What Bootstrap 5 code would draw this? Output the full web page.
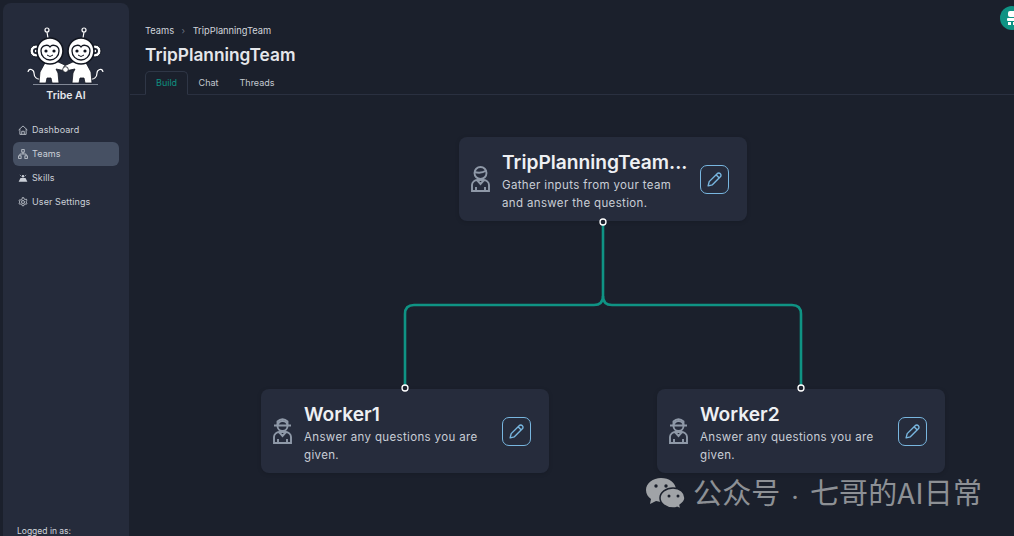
<!DOCTYPE html>
<html lang="en">
<head>
    <meta charset="UTF-8">
    <title>TripPlanningTeam - Tribe AI</title>
    <link href="https://cdn.jsdelivr.net/npm/bootstrap@5.3.3/dist/css/bootstrap.min.css" rel="stylesheet">
    <style>
        html, body { height: 100%; overflow: hidden; }
        body {
            font-family: Inter, "Liberation Sans", sans-serif;
            background-color: #1b202c;
            color: #e5e7eb;
        }
        .side-panel {
            width: 126px;
            margin: 3px 1px 0 3px;
            background-color: #252b3b;
            border-radius: 8px 8px 0 0;
            flex-shrink: 0;
        }
        .logo-box { padding-top: 21px; height: 111px; }
        .logo-box svg { display: block; margin: 0 auto; }
        .logo-name { font-size: 10.5px; font-weight: 600; line-height: 12px; color: #e5e7eb; margin-top: 5px; }
        .side-nav { padding: 4px 10px 0; }
        .side-nav .nav-link {
            height: 24px;
            padding: 0 0 0 5px;
            font-size: 9px;
            letter-spacing: .1px;
            color: #cbd0d8;
            border-radius: 6px;
            gap: 4px;
        }
        .side-nav .nav-link.active { background-color: #465063; color: #cbd0d8; }
        .side-nav svg { width: 10px; height: 10px; flex-shrink: 0; }
        .login-note { font-size: 8.5px; color: #d1d5db; padding: 0 0 0 14px; line-height: 12px; margin-bottom: -1px; }
        .page-head { padding: 25px 0 0 15px; height: 95px; border-bottom: 1px solid #2a3040; }
        .page-head .breadcrumb {
            font-size: 9.3px;
            line-height: 12px;
            margin: 0;
            --bs-breadcrumb-divider: "›";
            --bs-breadcrumb-divider-color: #6b7280;
            --bs-breadcrumb-item-padding-x: 7.5px;
        }
        .page-head .breadcrumb-item, .page-head .breadcrumb-item.active { color: #d1d5db; }
        .page-head h1 { font-size: 17.3px; line-height: 22px; font-weight: 600; margin: 7px 0 5px; color: #e5e7eb; }
        .head-tabs { --bs-nav-tabs-border-width: 0; }
        .head-tabs .nav-link {
            font-size: 9px;
            height: 24px;
            line-height: 13px;
            padding: 4px 9.5px;
            color: #c3c8d0;
            border: 1px solid transparent;
            border-radius: 5px 5px 0 0;
        }
        .head-tabs .nav-link.active {
            background: transparent;
            padding: 4px 10px;
            color: #0f8f80;
            border-color: #2f3646;
            border-bottom-color: #1b202c;
        }
        .flow-canvas { position: relative; flex-grow: 1; }
        .flow-lines { position: absolute; left: 0; top: 0; z-index: 1; }
        .flow-node {
            position: absolute;
            width: 288px;
            height: 84px;
            background-color: #262c3c;
            border-radius: 8px;
            padding: 0 18px 0 12px;
            box-shadow: 0 1px 4px rgba(0, 0, 0, .15);
        }
        .node-lead { left: 329px; top: 42px; }
        .node-one { left: 131px; top: 294px; }
        .node-two { left: 527px; top: 294px; }
        .node-icon { width: 19px; height: 26px; flex-shrink: 0; margin-right: 12px; }
        .node-text { flex-grow: 1; min-width: 0; padding-top: 4px; }
        .node-title { font-size: 19.2px; line-height: 22px; font-weight: 600; color: #eef0f3; margin: 0 0 3px; white-space: nowrap; }
        .node-desc { font-size: 11.5px; line-height: 18px; letter-spacing: .35px; color: #c9ced6; margin: 0; }
        .edit-btn {
            width: 29px;
            height: 29px;
            padding: 0;
            flex-shrink: 0;
            border: 1px solid #78b6df;
            border-radius: 7px;
            background: transparent;
            color: #78b6df;
        }
        .edit-btn svg { width: 17px; height: 17px; display: block; margin: 0 auto; }
        .user-dot {
            position: absolute;
            left: 1000px;
            top: 6px;
            width: 24px;
            height: 24px;
            border-radius: 50%;
            background-color: #0f9384;
        }
        .user-dot svg { position: absolute; left: 6px; top: 5px; width: 12px; height: 14px; }
        .water-mark {
            position: absolute;
            left: 646px;
            top: 473px;
            height: 40px;
            gap: 7px;
            font-family: "Noto Sans CJK SC", sans-serif;
            font-size: 29px;
            line-height: 40px;
            letter-spacing: .15px;
            word-spacing: -1px;
            color: #8d9095;
            white-space: nowrap;
        }
        .mark-sep { font-size: 18px; font-weight: 300; }
    </style>
</head>
<body class="d-flex">

    <aside class="side-panel d-flex flex-column">
        <div class="logo-box text-center">
            <svg width="80" height="61" viewBox="26 24 80 61" fill="none">
                <!-- antennas -->
                <g stroke="#fff" stroke-width="1.200">
                    <circle cx="47" cy="30" r="2" fill="#252b3b"/><circle cx="84" cy="30" r="2" fill="#252b3b"/>
                    <path d="M47 32l1 6M84 32l-1 6"/>
                </g>
                <!-- tails -->
                <path d="M41 79c-4 1-7-2-7-6 0-3-5-6-6-1M90 79c4 1 7-2 7-6 0-3 5-6 6-1" stroke="#fff" stroke-width="1.200"/>
                <!-- bodies -->
                <g fill="#fff" stroke="#11151f" stroke-width=".8">
                    <path d="M46 61l-6 11-1 11h7l1-5 4 0 1 5h7l-1-10-2-4 10 2 1-5-11-5-4-2z"/>
                    <path d="M85 61l6 11 1 11h-7l-1-5-4 0-1 5h-7l1-10 2-4-10 2-1-5 11-5 4-2z"/>
                    <circle cx="65.500" cy="69.500" r="2.800"/>
                </g>
                <!-- ears -->
                <circle cx="36" cy="51" r="6" fill="#fff" stroke="#11151f"/><circle cx="36" cy="51" r="3" fill="#1b202c"/><circle cx="36" cy="51" r="1.200" fill="#fff"/>
                <circle cx="95" cy="51" r="6" fill="#fff" stroke="#11151f"/><circle cx="95" cy="51" r="3" fill="#1b202c"/><circle cx="95" cy="51" r="1.200" fill="#fff"/>
                <!-- heads -->
                <circle cx="50" cy="51" r="13" fill="#fff" stroke="#11151f" stroke-width="1.600"/>
                <circle cx="81" cy="51" r="13" fill="#fff" stroke="#11151f" stroke-width="1.600"/>
                <path d="M50 47c-2-3-9-2-9 4 0 5 4 9 9 9s9-4 9-9c0-6-7-7-9-4z" stroke="#11151f" stroke-width="1.300"/>
                <path d="M81 47c-2-3-9-2-9 4 0 5 4 9 9 9s9-4 9-9c0-6-7-7-9-4z" stroke="#11151f" stroke-width="1.300"/>
                <circle cx="46" cy="51" r="1.600" fill="#11151f"/><circle cx="54" cy="51" r="1.600" fill="#11151f"/>
                <circle cx="77" cy="51" r="1.600" fill="#11151f"/><circle cx="85" cy="51" r="1.600" fill="#11151f"/>
                <path d="M47 55q3 3 6 0M78 55q3 3 6 0" stroke="#11151f"/>
                <path d="M33 84.500h65" stroke="#9aa1ad" stroke-width=".8"/>
            </svg>
            <div class="logo-name">Tribe AI</div>
        </div>

        <nav class="nav flex-column side-nav">
            <a class="nav-link d-flex align-items-center" href="#">
                <svg viewBox="0 0 16 16" fill="none" stroke="currentColor" stroke-width="1.300"><path d="M1 8l7-6.500L15 8M3 6.500V15h10V6.500M6 15v-5h4v5"/></svg>
                Dashboard
            </a>
            <a class="nav-link active d-flex align-items-center" href="#">
                <svg viewBox="0 0 16 16" fill="none" stroke="currentColor" stroke-width="1.300"><rect x="6" y="1" width="4" height="4"/><rect x="1" y="11" width="4" height="4"/><rect x="11" y="11" width="4" height="4"/><path d="M8 5v3M3 11V8h10v3"/></svg>
                Teams
            </a>
            <a class="nav-link d-flex align-items-center" href="#">
                <svg viewBox="0 0 16 16" fill="currentColor"><path d="M1 14l3-6h8l3 6z"/><circle cx="8" cy="5" r="2"/><path d="M3 3l2 2M13 3l-2 2" stroke="currentColor"/></svg>
                Skills
            </a>
            <a class="nav-link d-flex align-items-center" href="#">
                <svg viewBox="0 0 16 16" fill="none" stroke="currentColor" stroke-width="1.300"><circle cx="8" cy="8" r="2.400"/><path d="M6.800 1h2.400l.4 2 1.700 1 2-.7 1.200 2-1.500 1.400v1.600l1.500 1.400-1.200 2-2-.7-1.700 1-.4 2H6.800l-.4-2-1.700-1-2 .7-1.200-2 1.500-1.400V7.700L1.500 6.300l1.200-2 2 .7 1.700-1z"/></svg>
                User Settings
            </a>
        </nav>

        <div class="login-note mt-auto">Logged in as:</div>
    </aside>

    <main class="d-flex flex-column flex-grow-1">
        <header class="page-head">
            <ol class="breadcrumb">
                <li class="breadcrumb-item">Teams</li>
                <li class="breadcrumb-item active">TripPlanningTeam</li>
            </ol>
            <h1>TripPlanningTeam</h1>
            <ul class="nav nav-tabs head-tabs border-0">
                <li class="nav-item"><a class="nav-link active" href="#">Build</a></li>
                <li class="nav-item"><a class="nav-link" href="#">Chat</a></li>
                <li class="nav-item"><a class="nav-link" href="#">Threads</a></li>
            </ul>
        </header>

        <section class="flow-canvas">
            <svg class="flow-lines" width="884" height="441" fill="none">
                <path d="M473 127V201Q473 210 464 210H284Q275 210 275 219V293" stroke="#0f9384" stroke-width="2.600"/>
                <path d="M473 201Q473 210 482 210H662Q671 210 671 219V293" stroke="#0f9384" stroke-width="2.600"/>
                <g fill="#1b202c" stroke="#fff" stroke-width="1.300">
                    <circle cx="473" cy="127" r="3"/>
                    <circle cx="275" cy="293" r="3"/>
                    <circle cx="671" cy="293" r="3"/>
                </g>
            </svg>

            <div class="flow-node node-lead d-flex align-items-center">
                <svg class="node-icon" viewBox="0 0 19 26" fill="none" stroke="#8f99a8" stroke-width="1.900"><circle cx="9.500" cy="7" r="6"/><path d="M3.500 6c3 1 8 1 12-1.500"/><path d="M1 25v-6c0-3 3-5 5-5h7c2 0 5 2 5 5v6zM6 14l3.500 4 3.500-4M5 25v-4M14 25v-4"/></svg>
                <div class="node-text">
                    <h5 class="node-title">TripPlanningTeam...</h5>
                    <p class="node-desc">Gather inputs from your team<br>and answer the question.</p>
                </div>
                <button type="button" class="btn edit-btn">
                    <svg viewBox="0 0 16 16" fill="none" stroke="currentColor" stroke-width="1.300" stroke-linejoin="round"><path d="M2 14l1-4 7.500-7.500a1.800 1.800 0 0 1 3 3L6 13z"/><path d="M9.500 3.500l3 3"/></svg>
                </button>
            </div>

            <div class="flow-node node-one d-flex align-items-center">
                <svg class="node-icon" viewBox="0 0 19 26" fill="none" stroke="#8f99a8" stroke-width="1.900"><circle cx="9.500" cy="8" r="5"/><path d="M1 7.500h17M4.500 7V3.500c3-3 7-3 10 0V7"/><path d="M1 25v-6c0-3 3-5 5-5h7c2 0 5 2 5 5v6zM6 14l3.500 4 3.500-4M5 25v-4M14 25v-4"/></svg>
                <div class="node-text">
                    <h5 class="node-title">Worker1</h5>
                    <p class="node-desc">Answer any questions you are given.</p>
                </div>
                <button type="button" class="btn edit-btn">
                    <svg viewBox="0 0 16 16" fill="none" stroke="currentColor" stroke-width="1.300" stroke-linejoin="round"><path d="M2 14l1-4 7.500-7.500a1.800 1.800 0 0 1 3 3L6 13z"/><path d="M9.500 3.500l3 3"/></svg>
                </button>
            </div>

            <div class="flow-node node-two d-flex align-items-center">
                <svg class="node-icon" viewBox="0 0 19 26" fill="none" stroke="#8f99a8" stroke-width="1.900"><circle cx="9.500" cy="8" r="5"/><path d="M1 7.500h17M4.500 7V3.500c3-3 7-3 10 0V7"/><path d="M1 25v-6c0-3 3-5 5-5h7c2 0 5 2 5 5v6zM6 14l3.500 4 3.500-4M5 25v-4M14 25v-4"/></svg>
                <div class="node-text">
                    <h5 class="node-title">Worker2</h5>
                    <p class="node-desc">Answer any questions you are given.</p>
                </div>
                <button type="button" class="btn edit-btn">
                    <svg viewBox="0 0 16 16" fill="none" stroke="currentColor" stroke-width="1.300" stroke-linejoin="round"><path d="M2 14l1-4 7.500-7.500a1.800 1.800 0 0 1 3 3L6 13z"/><path d="M9.500 3.500l3 3"/></svg>
                </button>
            </div>
        </section>
    </main>

    <div class="user-dot">
        <svg viewBox="0 0 12 14" fill="#fff"><rect x="2" y="0" width="8" height="6" rx="2"/><rect x="1" y="7" width="10" height="3" rx="1"/><path d="M2 11h3v3H2zM7 11h3v3H7z"/></svg>
    </div>

    <div class="water-mark d-flex align-items-center">
        <svg width="40" height="32" viewBox="0 0 40 32">
            <path d="M15 1C7 1 0 6 0 13c0 4 2 7 5 9l-1 5 6-3c2 .6 3 .7 5 .7 8 0 15-5 15-12S23 1 15 1z" fill="#a0a3a7"/>
            <path d="M27 11c-7 0-13 4.500-13 10s6 10 13 10c1.500 0 3-.2 4-.6l4 1.600-1-4c3-2 5-4 5-7 0-5.500-5-10-12-10z" fill="#a0a3a7" stroke="#1b202c" stroke-width="1.500"/>
            <circle cx="10" cy="9" r="1.700" fill="#1b202c"/><circle cx="20" cy="9" r="1.700" fill="#1b202c"/>
            <circle cx="23" cy="19" r="1.500" fill="#1b202c"/><circle cx="32" cy="19" r="1.500" fill="#1b202c"/>
        </svg>
        <span>公众号 <span class="mark-sep">·</span> 七哥的AI日常</span>
    </div>

    <script src="https://cdn.jsdelivr.net/npm/bootstrap@5.3.3/dist/js/bootstrap.bundle.min.js"></script>
</body>
</html>
